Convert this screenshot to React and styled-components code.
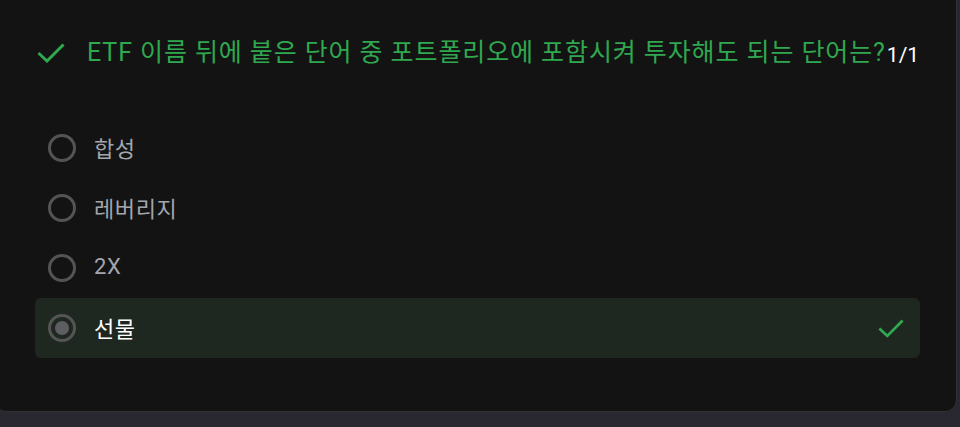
import React from "react";
import styled, { createGlobalStyle } from "styled-components";

const Global = createGlobalStyle`
  html, body { margin: 0; padding: 0; background: #29272f; }
  body { font-family: Roboto, "Noto Sans CJK KR", sans-serif; overflow: hidden; }
`;

const Card = styled.div`
  box-sizing: border-box;
  margin: -20px 3px 0 -6px;
  height: 432px;
  background: #131313;
  border: 1px solid #323236;
  border-radius: 12px;
  padding: 20px 0 0 0;
`;

const Header = styled.div`
  display: flex;
  align-items: center;
  height: 104px;
  padding-left: 42px;
`;

const TitleIcon = styled.div`
  width: 28px;
  height: 28px;
  display: flex;
  align-items: center;
  justify-content: center;
  margin-right: 22px;
  flex-shrink: 0;
`;

const Title = styled.div`
  color: #2fa84f;
  font-size: 25px;
  letter-spacing: 0.9px;
  line-height: 1.3;
  white-space: nowrap;
`;

const Counter = styled.div`
  color: #ffffff;
  font-size: 21px;
  margin-left: 1px;
  margin-top: 4px;
`;

const Options = styled.div`
  display: flex;
  flex-direction: column;
  padding: 13px 36px 0 40px;
`;

const Option = styled.div`
  display: flex;
  align-items: center;
  height: 60px;
  padding: 0 16px 0 13px;
  border-radius: 6px;
  background: ${(p) => (p.$selected ? "#1f2820" : "transparent")};
`;

const Radio = styled.div`
  box-sizing: border-box;
  width: 28px;
  height: 28px;
  border-radius: 50%;
  border: 3px solid #545457;
  display: flex;
  align-items: center;
  justify-content: center;
  flex-shrink: 0;
`;

const Dot = styled.div`
  width: 14px;
  height: 14px;
  border-radius: 50%;
  background: #5d5d62;
`;

const Label = styled.div`
  margin-left: 18px;
  margin-bottom: 3px;
  font-size: 22px;
  letter-spacing: 0.6px;
  color: ${(p) => (p.$selected ? "#ffffff" : "#a4a6ae")};
  flex: 1;
`;

const Check = ({ w = 28, h = 20 }) => (
  <svg width={w} height={h} viewBox="0 0 28 20" fill="none" stroke="#2fa84f" strokeWidth="3" strokeLinecap="butt" strokeLinejoin="miter">
    <path d="M1.5 10 L10 18 L26.5 1.5" />
  </svg>
);

const options = ["합성", "레버리지", "2X", "선물"];

export default function App() {
  return (
    <>
      <Global />
      <Card>
        <Header>
          <TitleIcon>
            <Check w={28} h={20} />
          </TitleIcon>
          <Title>ETF 이름 뒤에 붙은 단어 중 포트폴리오에 포함시켜 투자해도 되는 단어는?</Title>
          <Counter>1/1</Counter>
        </Header>
        <Options>
          {options.map((o, i) => {
            const sel = i === 3;
            return (
              <Option key={o} $selected={sel}>
                <Radio>{sel && <Dot />}</Radio>
                <Label $selected={sel}>{o}</Label>
                {sel && <Check w={26} h={19} />}
              </Option>
            );
          })}
        </Options>
      </Card>
    </>
  );
}
